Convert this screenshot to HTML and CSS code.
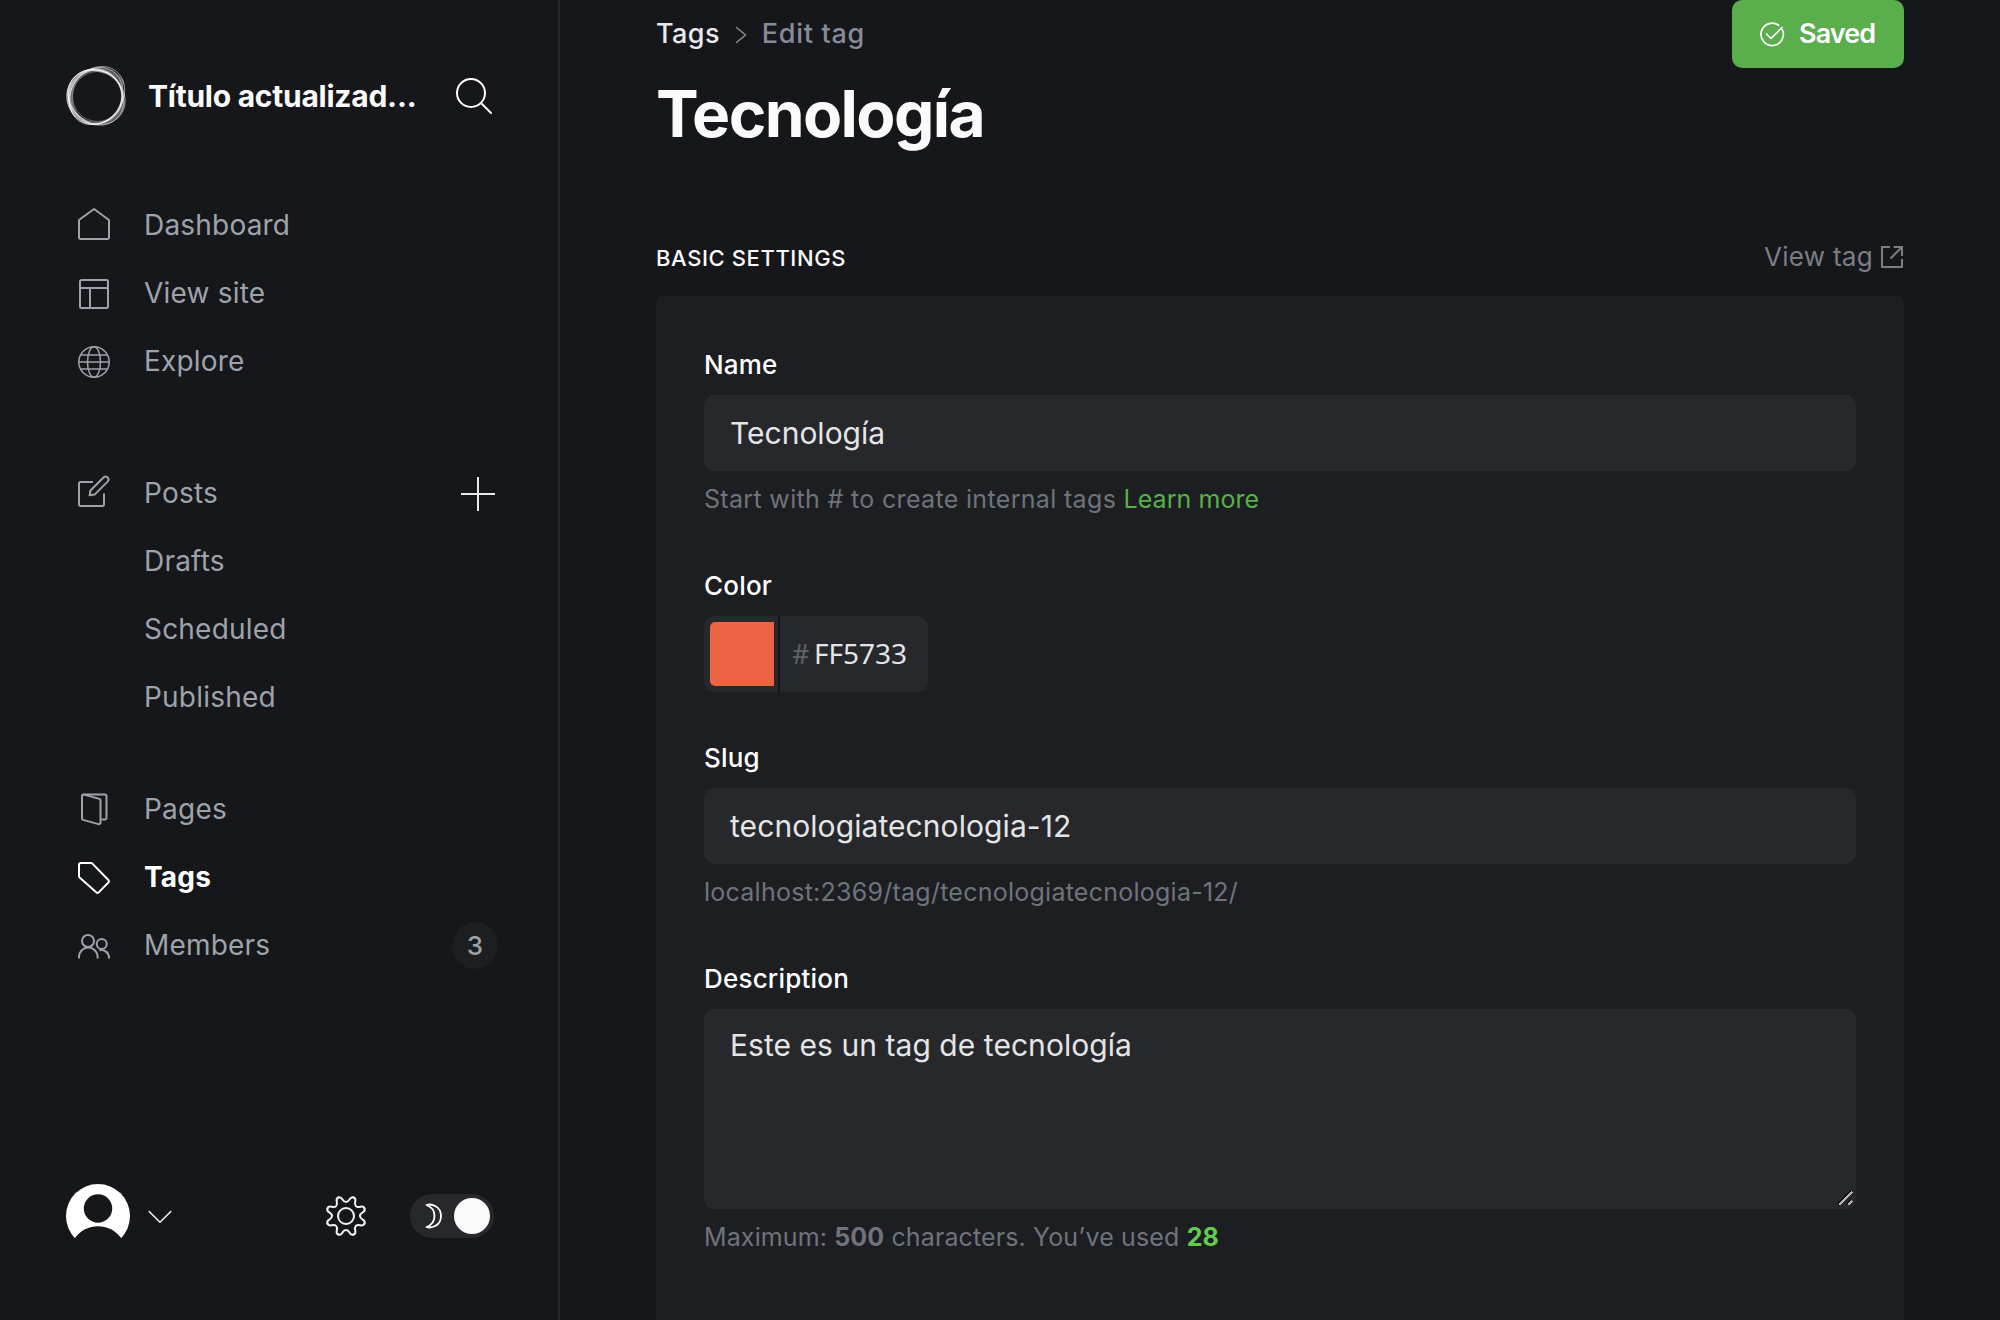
FILE: index.html
```html
<!DOCTYPE html>
<html lang="es">
<head>
<meta charset="utf-8">
<title>Tecnología</title>
<link rel="stylesheet" href="styles.css">
</head>
<body>
<div class="app">
  <nav class="sidebar">
    <header class="site">
      <svg class="logo" viewBox="0 0 60 60" fill="none" stroke="#fff">
        <g stroke-width=".8">
          <ellipse cx="31" cy="29.500" rx="31" ry="25.500" transform="rotate(-52 31 29.500)" opacity=".6"/>
          <ellipse cx="30" cy="30" rx="30" ry="25.500" transform="rotate(-56 30 30)" opacity=".5"/>
          <ellipse cx="30.500" cy="31" rx="30" ry="26" transform="rotate(36 30.500 31)" opacity=".65"/>
          <ellipse cx="30" cy="31.500" rx="29.500" ry="26" transform="rotate(44 30 31.500)" opacity=".6"/>
          <circle cx="28.300" cy="30.500" r="27.500" opacity=".75"/>
          <circle cx="29.500" cy="31" r="27" opacity=".7"/>
          <ellipse cx="30.500" cy="30.500" rx="26.500" ry="26" opacity=".5"/>
          <ellipse cx="31.500" cy="30.500" rx="25" ry="25" opacity=".45"/>
          <ellipse cx="29" cy="30.500" rx="28" ry="26.500" transform="rotate(-70 29 30.500)" opacity=".5"/>
        </g>
        <g stroke="none" fill="#fff" fill-rule="evenodd">
          <path opacity=".3" d="M26 3C36-2 51 3 58 16L56.500 24C52 12 42 7 26 5Z"/>
          <path opacity=".4" d="M28 2.500C12 3.500 .500 16 .500 30S12 55 26 58C12 51 6 42 6.500 30S14 8 28 4.500Z"/>
          <path opacity=".35" d="M57 26C61 38 56 50 46 55 40 58 34 58.500 28 57.500 44 57 58 45 56.500 28Z"/>
        </g>
      </svg>
      <span class="site-title">Título actualizad...</span>
      <svg class="search" viewBox="0 0 36 36" fill="none" stroke="#fff" stroke-width="2" stroke-linecap="round"><circle cx="15" cy="15" r="14"/><path d="M25 25 35 35"/></svg>
    </header>

    <ul class="menu">
      <li><svg class="icon home" viewBox="0 0 32 32"><path d="M1 12v17.500a1.500 1.500 0 0 0 1.500 1.500h27a1.500 1.500 0 0 0 1.500-1.500V12L16 1Z"/></svg><span>Dashboard</span></li>
      <li><svg class="icon low" viewBox="0 0 32 32"><rect x="2" y="2" width="28" height="28" rx="1.500"/><path d="M2 10h28M12 10v20"/></svg><span>View site</span></li>
      <li><svg class="icon low fine" viewBox="0 0 32 32"><circle cx="16" cy="16" r="15.200"/><ellipse cx="16" cy="16" rx="6.500" ry="15.200"/><path d="M1 16h30M2.500 9h27M2.500 23h27"/></svg><span>Explore</span></li>
    </ul>

    <ul class="menu posts">
      <li><svg class="icon high" viewBox="0 0 32 32"><path d="M15 7H2.500A1.500 1.500 0 0 0 1 8.500v21A1.500 1.500 0 0 0 2.500 31h22a1.500 1.500 0 0 0 1.500-1.500V18.500"/><path d="M12.500 15.500 25.700 2.200a3 3 0 0 1 4.200 4.200L16.600 19.600 11.600 20.300Z"/></svg><span>Posts</span>
        <svg class="plus" viewBox="0 0 34 34" fill="none" stroke="#e8e9ea" stroke-width="2"><path d="M17 0v34M0 17h34"/></svg></li>
      <li class="sub"><span>Drafts</span></li>
      <li class="sub"><span>Scheduled</span></li>
      <li class="sub"><span>Published</span></li>
    </ul>

    <ul class="menu manage">
      <li><svg class="icon" viewBox="0 0 32 32"><path d="M23.500 26.500H27a1.500 1.500 0 0 0 1.500-1.500V3A1.500 1.500 0 0 0 27 1.500H5"/><path d="M4 3v22.500a1.500 1.500 0 0 0 1 1.400l15.600 4.200a1.500 1.500 0 0 0 1.900-1.500V7.300a1.500 1.500 0 0 0-1.100-1.400L5.900 1.600A1.500 1.500 0 0 0 4 3Z"/></svg><span>Pages</span></li>
      <li class="active"><svg class="icon low" viewBox="0 0 32 32"><path d="M1 14V3a2 2 0 0 1 2-2h10a2 2 0 0 1 1.400.600L30.600 18.300a1.500 1.500 0 0 1 0 2L20.500 30.600a1.500 1.500 0 0 1-2 0L1.600 15.400A2 2 0 0 1 1 14Z"/></svg><span>Tags</span></li>
      <li><svg class="icon low" viewBox="0 0 32 32"><circle cx="10" cy="11" r="6"/><path d="M1 28.500v-1.700a9.300 9.300 0 0 1 18.600 0v1.700"/><circle cx="23.700" cy="14" r="5"/><path d="M21.500 20.200a7.800 7.800 0 0 1 9.500 7.300v1"/></svg><span>Members</span><b class="badge">3</b></li>
    </ul>

    <footer class="tools">
      <svg class="avatar" viewBox="0 0 64 64"><circle cx="32" cy="32" r="32" fill="#fff"/><circle cx="32" cy="24.500" r="14.200" fill="#16171b"/><path d="M8.500 54.500C20 38 44 38 55.500 54.500Q46 66 32 66T8.500 54.500Z" fill="#16171b"/></svg>
      <svg class="chevron" viewBox="0 0 24 14" fill="none" stroke="#f0f1f2" stroke-width="1.600" stroke-linecap="round" stroke-linejoin="round"><path d="M1.200 1.500 12 12.300 22.800 1.500"/></svg>
      <svg class="gear" viewBox="0 0 40 40" fill="none" stroke="#f0f1f2" stroke-width="2" stroke-linecap="round">
        <defs><path id="tooth" d="M12.300 1.500C16.800-.370 15.600 6 20 6S23.200-.370 27.700 1.500"/></defs>
        <circle cx="20" cy="20" r="8"/>
        <use href="#tooth"/><use href="#tooth" transform="rotate(45 20 20)"/><use href="#tooth" transform="rotate(90 20 20)"/><use href="#tooth" transform="rotate(135 20 20)"/>
        <use href="#tooth" transform="rotate(180 20 20)"/><use href="#tooth" transform="rotate(225 20 20)"/><use href="#tooth" transform="rotate(270 20 20)"/><use href="#tooth" transform="rotate(315 20 20)"/>
      </svg>
      <div class="toggle">
        <svg class="moon" viewBox="0 0 18 26" fill="none" stroke="#fff" stroke-width="1.800" stroke-linejoin="round"><path d="M1.500 2C6.500.500 16 3 16 13S6.500 25.500 1.500 24C7 22 9.500 18 9.500 13S7 4 1.500 2Z"/></svg>
        <i class="knob"></i>
      </div>
    </footer>
  </nav>

  <main class="content">
    <header class="page-head">
      <div>
        <div class="crumbs"><span class="crumb-link">Tags</span><svg viewBox="0 0 12 18" fill="none" stroke="#868c96" stroke-width="1.600" stroke-linecap="round" stroke-linejoin="round"><path d="M1.500 1.500 10.500 9 1.500 16.500"/></svg><span class="crumb-here">Edit tag</span></div>
        <h1>Tecnología</h1>
      </div>
      <button class="save"><svg viewBox="0 0 24 24" fill="none" stroke="#fff" stroke-width="1.700" stroke-linecap="round" stroke-linejoin="round"><path d="M18.600 3.200A11.200 11.200 0 1 0 22.300 7.600"/><path d="M6.500 12 11 16.500 22 5.500"/></svg><span>Saved</span></button>
    </header>

    <div class="section-head">
      <h2>Basic settings</h2>
      <a class="view"><span>View tag</span><svg viewBox="0 0 22 22" fill="none" stroke="#7a7f85" stroke-width="2"><path d="M9 1H1v20h20v-8M12.500 1H21v9M21 1 9.500 12.500"/></svg></a>
    </div>

    <section class="card">
      <div class="field">
        <label>Name</label>
        <div class="input"><span>Tecnología</span></div>
        <p class="help name-help">Start with # to create internal tags <a>Learn more</a></p>
      </div>
      <div class="field color-field">
        <label>Color</label>
        <div class="color"><div class="swatch-cell"><i class="swatch"></i></div><div class="hex"><span class="hash">#</span><span>FF5733</span></div></div>
      </div>
      <div class="field">
        <label>Slug</label>
        <div class="input slug"><span>tecnologiatecnologia-12</span></div>
        <p class="help url">localhost:2369/tag/tecnologiatecnologia-12/</p>
      </div>
      <div class="field">
        <label>Description</label>
        <div class="input area"><span>Este es un tag de tecnología</span>
          <svg class="grip" viewBox="0 0 16 16" shape-rendering="crispEdges"><path d="M1 14 14 1M10 14l4-4" stroke="#111" stroke-width="2"/><path d="M2 15 15 2M11 15l4-4" stroke="#b5b5b5" stroke-width="1.600"/></svg></div>
        <p class="help count">Maximum: <b>500</b> characters. You’ve used <b class="used">28</b></p>
      </div>
    </section>
  </main>
</div>
</body>
</html>
```
FILE: styles.css
```css
* { box-sizing: border-box; }
body {
  margin: 0;
  background: #16171b;
  color: #fafafa;
  font-family: Inter, "Liberation Sans", sans-serif;
}
h1, h2, p, ul { margin: 0; padding: 0; }
svg { display: block; flex: none; overflow: visible; }
span, p, h1, h2, label { white-space: nowrap; }

.app { display: flex; width: 2000px; height: 1320px; overflow: hidden; }

/* Sidebar */
.sidebar {
  display: flex;
  flex-direction: column;
  width: 560px;
  flex: none;
  padding: 66px 64px 72px 66px;
  border-right: 2px solid #242529;
}
.site { display: flex; align-items: center; height: 60px; }
.logo { width: 60px; height: 60px; }
.site-title { margin-left: 22px; width: 308px; font-size: 30px; font-weight: 700; letter-spacing: -.25px; }
.search { width: 36px; height: 36px; }

.menu { list-style: none; margin-top: 65px; }
.posts { margin-top: 64px; }
.manage { margin-top: 44px; }
.menu li {
  display: flex;
  align-items: center;
  height: 68px;
  padding-left: 12px;
  color: #9da3aa;
  font-size: 28px;
  letter-spacing: .2px;
}
.menu li span { margin-left: 34px; }
.menu li.sub span { margin-left: 66px; }
.icon {
  width: 32px;
  height: 32px;
  fill: none;
  stroke: #9da3aa;
  stroke-width: 2;
  stroke-linejoin: round;
}
.icon.home { margin-top: -2px; }
.icon.low { margin-top: 2px; }
.icon.high { margin-top: -4px; }
.icon.fine { stroke-width: 1.5; }
.menu li.active { color: #fff; font-weight: 700; }
.plus { width: 34px; height: 34px; margin: 2px -1px 0 auto; }
.active .icon { stroke: #fff; }
.badge {
  display: flex;
  align-items: center;
  justify-content: center;
  width: 46px;
  height: 47px;
  margin-left: auto;
  margin-right: -4px;
  border-radius: 50%;
  background: #1d1e22;
  font-size: 26px;
  font-weight: 500;
}

.tools { display: flex; align-items: center; height: 64px; margin-top: auto; }
.avatar { width: 64px; height: 64px; }
.chevron { width: 24px; height: 14px; margin: 2px 0 0 18px; }
.gear { width: 40px; height: 40px; margin-left: 154px; }
.toggle {
  display: flex;
  align-items: center;
  width: 84px;
  height: 44px;
  margin-left: 44px;
  padding: 0 4px 0 15px;
  border-radius: 22px;
  background: #27282c;
}
.moon { width: 18px; height: 26px; }
.knob { width: 36px; height: 36px; margin-left: auto; border-radius: 50%; background: #fafafa; }

/* Content */
.content { width: 1248px; margin-left: 96px; display: flex; flex-direction: column; }
.page-head { display: flex; justify-content: space-between; height: 228px; }
.crumbs { display: flex; align-items: center; height: 68px; padding-bottom: 1px; font-size: 27px; font-weight: 500; letter-spacing: .4px; }
.crumbs svg { width: 12px; height: 18px; margin: 3px 15px 0; }
.crumb-link { color: #e8e9ea; }
.crumb-here { color: #868c96; letter-spacing: .7px; }
h1 { margin-top: 7px; font-size: 64px; line-height: 77px; font-weight: 700; letter-spacing: -1.6px; }
.save {
  display: flex;
  align-items: center;
  width: 172px;
  height: 68px;
  padding: 0 28px 1px;
  gap: 15px;
  border: 0;
  border-radius: 10px;
  background: #5aae4c;
  color: #fff;
  font: 600 27px Inter, sans-serif;
  letter-spacing: -.9px;
}
.save svg { width: 24px; height: 24px; }
.section-head { display: flex; justify-content: space-between; height: 68px; padding-top: 13px; }
h2 { font-size: 22px; line-height: 34px; font-weight: 500; letter-spacing: .6px; text-transform: uppercase; }
.view { display: flex; height: 32px; align-items: center; gap: 8px; margin-right: 1px; color: #7a7f85; font-size: 26px; letter-spacing: .3px; }
.view span { margin-top: -2px; }
.view svg { width: 22px; height: 22px; }

.card { flex: 1; padding: 48px; border-radius: 8px 8px 0 0; background: #1d1e22; }
.field { height: 221px; }
.color-field { height: 172px; }
label { display: block; height: 51px; line-height: 42px; font-size: 26px; font-weight: 500; color: #fff; letter-spacing: .2px; }
.input {
  display: flex;
  align-items: center;
  height: 76px;
  padding: 0 26px;
  border-radius: 10px;
  background: #27282c;
  color: #e4e5e6;
  font-size: 30px;
}
.slug { letter-spacing: .08px; }
.area { height: 200px; padding: 18px 4px 4px 26px; align-items: flex-start; justify-content: space-between; line-height: 36px; letter-spacing: .05px; }
.grip { width: 16px; height: 16px; align-self: flex-end; margin: 0 -1px -1px 0; }
.help { margin-top: 9px; line-height: 38px; font-size: 25px; color: #6e747b; letter-spacing: .25px; }
.name-help { letter-spacing: .33px; }
.help a { color: #57b147; letter-spacing: .05px; }
.count { letter-spacing: .12px; }
.used { color: #65cc51; }
.color { display: flex; width: 224px; height: 76px; border-radius: 10px; overflow: hidden; background: #27282c; }
.swatch-cell { width: 76px; padding: 6px; border-right: 2px solid #121316; }
.swatch { display: block; width: 64px; height: 64px; border-radius: 5px 0 0 5px; background: #ec6442; }
.hex { display: flex; align-items: center; padding: 0 0 2px 12px; gap: 6px; color: #e4e5e6; font-family: "Noto Sans", sans-serif; font-size: 28px; }
.hash { width: 16px; color: #5f6468; font-size: 27px; }
```
